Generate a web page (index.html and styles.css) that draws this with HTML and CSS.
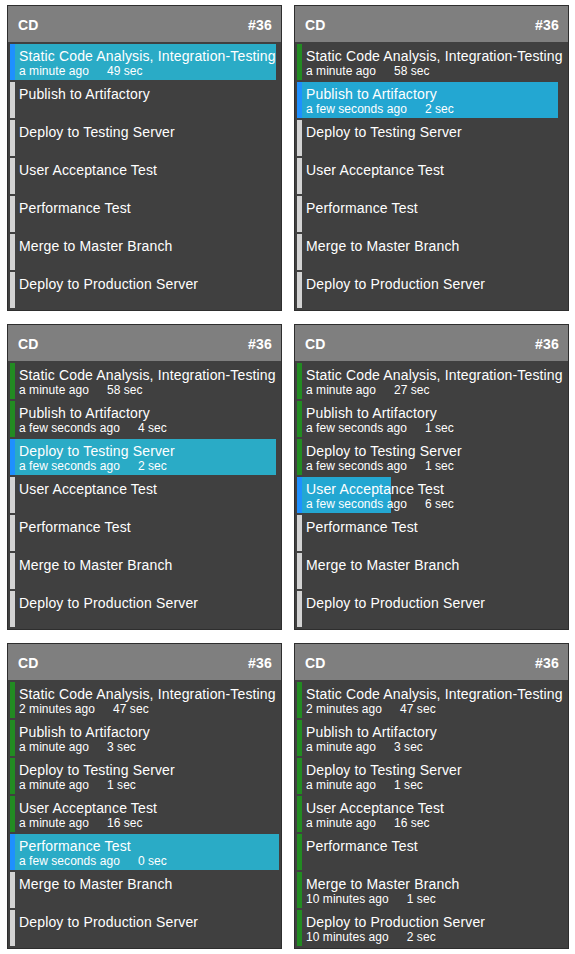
FILE: index.html
```html
<!DOCTYPE html>
<html>
<head>
<meta charset="utf-8">
<link rel="stylesheet" href="styles.css">
</head>
<body>
<div class="grid">

  <div class="panel">
    <div class="head"><span>CD</span><span>#36</span></div>
    <div class="items">
      <div class="item running" style="--p:99%"><div class="bar"></div><div class="txt"><div class="t">Static Code Analysis, Integration-Testing</div><div class="s"><span>a minute ago</span><span class="d">49 sec</span></div></div></div>
      <div class="item pending"><div class="bar"></div><div class="txt"><div class="t">Publish to Artifactory</div></div></div>
      <div class="item pending"><div class="bar"></div><div class="txt"><div class="t">Deploy to Testing Server</div></div></div>
      <div class="item pending"><div class="bar"></div><div class="txt"><div class="t">User Acceptance Test</div></div></div>
      <div class="item pending"><div class="bar"></div><div class="txt"><div class="t">Performance Test</div></div></div>
      <div class="item pending"><div class="bar"></div><div class="txt"><div class="t">Merge to Master Branch</div></div></div>
      <div class="item pending"><div class="bar"></div><div class="txt"><div class="t">Deploy to Production Server</div></div></div>
    </div>
  </div>

  <div class="panel">
    <div class="head"><span>CD</span><span>#36</span></div>
    <div class="items">
      <div class="item done"><div class="bar"></div><div class="txt"><div class="t">Static Code Analysis, Integration-Testing</div><div class="s"><span>a minute ago</span><span class="d">58 sec</span></div></div></div>
      <div class="item running alt" style="--p:97%"><div class="bar"></div><div class="txt"><div class="t">Publish to Artifactory</div><div class="s"><span>a few seconds ago</span><span class="d">2 sec</span></div></div></div>
      <div class="item pending"><div class="bar"></div><div class="txt"><div class="t">Deploy to Testing Server</div></div></div>
      <div class="item pending"><div class="bar"></div><div class="txt"><div class="t">User Acceptance Test</div></div></div>
      <div class="item pending"><div class="bar"></div><div class="txt"><div class="t">Performance Test</div></div></div>
      <div class="item pending"><div class="bar"></div><div class="txt"><div class="t">Merge to Master Branch</div></div></div>
      <div class="item pending"><div class="bar"></div><div class="txt"><div class="t">Deploy to Production Server</div></div></div>
    </div>
  </div>

  <div class="panel">
    <div class="head"><span>CD</span><span>#36</span></div>
    <div class="items">
      <div class="item done"><div class="bar"></div><div class="txt"><div class="t">Static Code Analysis, Integration-Testing</div><div class="s"><span>a minute ago</span><span class="d">58 sec</span></div></div></div>
      <div class="item done"><div class="bar"></div><div class="txt"><div class="t">Publish to Artifactory</div><div class="s"><span>a few seconds ago</span><span class="d">4 sec</span></div></div></div>
      <div class="item running" style="--p:99%"><div class="bar"></div><div class="txt"><div class="t">Deploy to Testing Server</div><div class="s"><span>a few seconds ago</span><span class="d">2 sec</span></div></div></div>
      <div class="item pending"><div class="bar"></div><div class="txt"><div class="t">User Acceptance Test</div></div></div>
      <div class="item pending"><div class="bar"></div><div class="txt"><div class="t">Performance Test</div></div></div>
      <div class="item pending"><div class="bar"></div><div class="txt"><div class="t">Merge to Master Branch</div></div></div>
      <div class="item pending"><div class="bar"></div><div class="txt"><div class="t">Deploy to Production Server</div></div></div>
    </div>
  </div>

  <div class="panel">
    <div class="head"><span>CD</span><span>#36</span></div>
    <div class="items">
      <div class="item done"><div class="bar"></div><div class="txt"><div class="t">Static Code Analysis, Integration-Testing</div><div class="s"><span>a minute ago</span><span class="d">27 sec</span></div></div></div>
      <div class="item done"><div class="bar"></div><div class="txt"><div class="t">Publish to Artifactory</div><div class="s"><span>a few seconds ago</span><span class="d">1 sec</span></div></div></div>
      <div class="item done"><div class="bar"></div><div class="txt"><div class="t">Deploy to Testing Server</div><div class="s"><span>a few seconds ago</span><span class="d">1 sec</span></div></div></div>
      <div class="item running alt" style="--p:35%"><div class="bar"></div><div class="txt"><div class="t">User Acceptance Test</div><div class="s"><span>a few seconds ago</span><span class="d">6 sec</span></div></div></div>
      <div class="item pending"><div class="bar"></div><div class="txt"><div class="t">Performance Test</div></div></div>
      <div class="item pending"><div class="bar"></div><div class="txt"><div class="t">Merge to Master Branch</div></div></div>
      <div class="item pending"><div class="bar"></div><div class="txt"><div class="t">Deploy to Production Server</div></div></div>
    </div>
  </div>

  <div class="panel">
    <div class="head"><span>CD</span><span>#36</span></div>
    <div class="items">
      <div class="item done"><div class="bar"></div><div class="txt"><div class="t">Static Code Analysis, Integration-Testing</div><div class="s"><span>2 minutes ago</span><span class="d">47 sec</span></div></div></div>
      <div class="item done"><div class="bar"></div><div class="txt"><div class="t">Publish to Artifactory</div><div class="s"><span>a minute ago</span><span class="d">3 sec</span></div></div></div>
      <div class="item done"><div class="bar"></div><div class="txt"><div class="t">Deploy to Testing Server</div><div class="s"><span>a minute ago</span><span class="d">1 sec</span></div></div></div>
      <div class="item done"><div class="bar"></div><div class="txt"><div class="t">User Acceptance Test</div><div class="s"><span>a minute ago</span><span class="d">16 sec</span></div></div></div>
      <div class="item running" style="--p:100%"><div class="bar"></div><div class="txt"><div class="t">Performance Test</div><div class="s"><span>a few seconds ago</span><span class="d">0 sec</span></div></div></div>
      <div class="item pending"><div class="bar"></div><div class="txt"><div class="t">Merge to Master Branch</div></div></div>
      <div class="item pending"><div class="bar"></div><div class="txt"><div class="t">Deploy to Production Server</div></div></div>
    </div>
  </div>

  <div class="panel">
    <div class="head"><span>CD</span><span>#36</span></div>
    <div class="items">
      <div class="item done"><div class="bar"></div><div class="txt"><div class="t">Static Code Analysis, Integration-Testing</div><div class="s"><span>2 minutes ago</span><span class="d">47 sec</span></div></div></div>
      <div class="item done"><div class="bar"></div><div class="txt"><div class="t">Publish to Artifactory</div><div class="s"><span>a minute ago</span><span class="d">3 sec</span></div></div></div>
      <div class="item done"><div class="bar"></div><div class="txt"><div class="t">Deploy to Testing Server</div><div class="s"><span>a minute ago</span><span class="d">1 sec</span></div></div></div>
      <div class="item done"><div class="bar"></div><div class="txt"><div class="t">User Acceptance Test</div><div class="s"><span>a minute ago</span><span class="d">16 sec</span></div></div></div>
      <div class="item done"><div class="bar"></div><div class="txt"><div class="t">Performance Test</div></div></div>
      <div class="item done"><div class="bar"></div><div class="txt"><div class="t">Merge to Master Branch</div><div class="s"><span>10 minutes ago</span><span class="d">1 sec</span></div></div></div>
      <div class="item done"><div class="bar"></div><div class="txt"><div class="t">Deploy to Production Server</div><div class="s"><span>10 minutes ago</span><span class="d">2 sec</span></div></div></div>
    </div>
  </div>

</div>
</body>
</html>
```

FILE: styles.css
```css
* { box-sizing: border-box; }

body {
  margin: 0;
  background: #ffffff;
  font-family: "Liberation Sans", Arial, sans-serif;
  color: #ffffff;
}

.grid {
  display: grid;
  grid-template-columns: 275px 275px;
  column-gap: 12px;
  row-gap: 13px;
  padding: 5px 0 0 7px;
}

.panel {
  border: 1px solid #2e2e2e;
  background: #404040;
  height: 306px;
}

.head {
  height: 36px;
  background: #7f7f7f;
  display: flex;
  justify-content: space-between;
  align-items: center;
  padding: 1px 9px 0 10px;
  font-size: 14px;
  font-weight: bold;
  letter-spacing: 0.2px;
}

.items {
  padding: 2px;
  display: flex;
  flex-direction: column;
  gap: 2px;
}

.item {
  height: 36px;
  display: flex;
  white-space: nowrap;
}

.item.running {
  background: linear-gradient(to right, #2aabc6 var(--p), transparent var(--p));
}

.item.running.alt {
  background: linear-gradient(to right, #23a7d2 var(--p), transparent var(--p));
}

.bar {
  width: 5px;
  flex: none;
  background: #d3d3d3;
}

.done .bar { background: #228b22; }
.running .bar { background: #1e90ff; }

.txt {
  padding: 4px 0 0 4px;
  min-width: 0;
}

.t {
  font-size: 14px;
  line-height: 16px;
  letter-spacing: 0.15px;
}

.s {
  font-size: 12px;
  line-height: 14px;
  letter-spacing: 0.05px;
}

.d {
  margin-left: 18px;
}
```
